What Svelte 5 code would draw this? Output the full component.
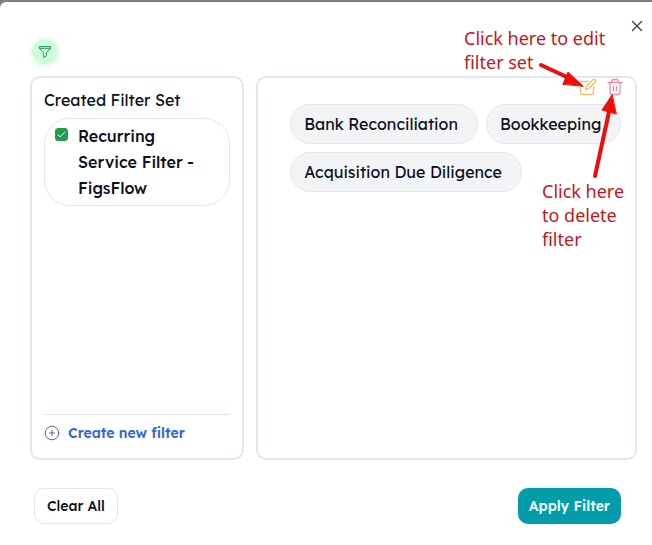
<script lang="ts">
  let filterSets = $state([
    {
      id: 1,
      name: 'Recurring Service Filter - FigsFlow',
      checked: true,
      services: [
        'Bank Reconciliation',
        'Bookkeeping',
        'Acquisition Due Diligence',
      ],
    },
  ])

  let services = $derived(
    filterSets.filter((f) => f.checked).flatMap((f) => f.services)
  )

  function clearAll() {
    filterSets.forEach((f) => (f.checked = false))
  }
</script>

<div class="modal">
  <header>
    <button class="filterToggle" aria-label="Filters">
      <svg width="14" height="14" viewBox="0 0 14 14">
        <path d="M1.5 1.5h11v1.8L8.6 7.6v3.2L5.6 12.6v-5L1.5 3.3z M1.5 3.3h11" />
      </svg>
    </button>
    <button class="close" aria-label="Close">
      <svg width="12" height="12" viewBox="0 0 12 12">
        <path d="M1.5 1.5l9 9M10.5 1.5l-9 9" />
      </svg>
    </button>
  </header>

  <main>
    <section class="panel sets">
      <h2>Created Filter Set</h2>
      <div class="setList">
        {#each filterSets as f (f.id)}
          <label class="set">
            <span class="tick">
              <input type="checkbox" bind:checked={f.checked} />
              <svg width="9" height="7" viewBox="0 0 9 7">
                <path d="M1 3.7l2.2 2.1L8 1" />
              </svg>
            </span>
            <span>{f.name}</span>
          </label>
        {/each}
      </div>
      <div class="create">
        <button>
          <svg width="16" height="16" viewBox="0 0 16 16">
            <circle cx="8" cy="8" r="6.8" />
            <path d="M8 5.5v5M5.5 8h5" />
          </svg>
          Create new filter
        </button>
      </div>
    </section>

    <section class="panel details">
      <div class="actions">
        <button class="edit" aria-label="Edit filter set">
          <svg width="18" height="18" viewBox="0 0 18 18">
            <path
              d="M9 3.5H3A1.5 1.5 0 0 0 1.5 5v10A1.5 1.5 0 0 0 3 16.5h10a1.5 1.5 0 0 0 1.5-1.5V9"
            />
            <path d="M6.5 11.5l.7-3L14.3 1.5a1 1 0 0 1 1.4 0l.8.8a1 1 0 0 1 0 1.4L9.5 10.8z" />
          </svg>
        </button>
        <button class="delete" aria-label="Delete filter set">
          <svg width="16" height="18" viewBox="0 0 16 18">
            <path d="M1 4.5h14M2.8 4.5l.4 10.5a1.5 1.5 0 0 0 1.5 1.5h6.6a1.5 1.5 0 0 0 1.5-1.5l.4-10.5" />
            <path d="M4.8 4.5V3A1.5 1.5 0 0 1 6.3 1.5h3.4A1.5 1.5 0 0 1 11.2 3v1.5" />
            <path d="M6.5 8.5v4M9.5 8.5v4" />
          </svg>
        </button>
      </div>
      <ul>
        {#each services as service}
          <li>{service}</li>
        {/each}
      </ul>

      <p class="note editNote">Click here to edit filter set</p>
      <p class="note deleteNote">Click here to delete filter</p>
      <svg class="arrows" width="110" height="130" viewBox="0 0 110 130">
        <path d="M16 7l28 13M70 118l14-64" />
        <polygon points="58,28 43,14 38,26" />
        <polygon points="87,37 77,52 91,56" />
      </svg>
    </section>
  </main>

  <footer>
    <button class="clear" onclick={clearAll}>Clear All</button>
    <button class="apply">Apply Filter</button>
  </footer>
</div>

<style>
  :global(body) {
    margin: 0;
    background: #808080;
  }

  .modal {
    box-sizing: border-box;
    min-height: calc(100vh - 2px);
    margin-top: 2px;
    padding: 16px 15px 20px 30px;
    border-radius: 6px 0 0 0;
    background: #fff;
    color: #0b1020;
    font-family: Lexend, Inter, sans-serif;
    font-size: 16px;
  }

  button {
    padding: 0;
    border: 0;
    background: none;
    color: inherit;
    font: inherit;
    cursor: pointer;
  }

  svg {
    display: block;
    fill: none;
    stroke: currentColor;
    stroke-linecap: round;
    stroke-linejoin: round;
  }

  header {
    display: flex;
    justify-content: space-between;
    align-items: flex-start;
    height: 58px;
  }

  .filterToggle {
    display: grid;
    place-items: center;
    width: 24px;
    height: 24px;
    margin: 22px 3px;
    border-radius: 50%;
    background: #cdfbdc;
    box-shadow: 0 0 4px 2px #d5fbe1;
    color: #2b9a62;
  }

  .close {
    display: grid;
    place-items: center;
    width: 16px;
    height: 16px;
    margin-right: -8px;
    color: #4a4f57;
  }

  .close svg {
    stroke-width: 1.5;
  }

  main {
    display: grid;
    grid-template-columns: 9fr 16fr;
    gap: 12px;
  }

  .panel {
    box-sizing: border-box;
    min-width: 0;
    border: 2px solid #e2e7ed;
    border-radius: 10px;
  }

  .sets {
    display: flex;
    flex-direction: column;
    padding: 10px 12px 13px;
  }

  h2 {
    margin: 0;
    font-size: 16px;
    font-weight: 400;
    line-height: 24px;
  }

  .setList {
    box-sizing: border-box;
    flex: 1;
    min-height: 302px;
    padding-top: 6px;
  }

  .set {
    display: flex;
    gap: 10px;
    padding: 4px 32px 4px 10px;
    border: 1px solid #e2e7ed;
    border-radius: 26px;
    font-weight: 500;
    line-height: 26px;
  }

  .tick {
    display: grid;
    flex: none;
    place-items: center;
    width: 13px;
    height: 13px;
    margin-top: 5px;
  }

  .tick > * {
    grid-area: 1 / 1;
  }

  .tick input {
    width: 13px;
    height: 13px;
    margin: 0;
    border: 1px solid #1f9d4d;
    border-radius: 3px;
    appearance: none;
  }

  .tick input:checked {
    background: #1f9d4d;
  }

  .tick svg {
    color: #fff;
    pointer-events: none;
  }

  .create {
    padding-top: 6px;
    border-top: 1px solid #e2e7ed;
  }

  .create button {
    display: flex;
    align-items: center;
    gap: 8px;
    color: #3468cf;
    font-size: 14px;
    font-weight: 600;
    line-height: 24px;
  }

  .create svg {
    color: #54689c;
  }

  .details {
    position: relative;
    padding-right: 8px;
    padding-left: 32px;
  }

  .actions {
    display: flex;
    justify-content: flex-end;
    gap: 10px;
    height: 26px;
    padding-right: 4px;
  }

  .actions svg {
    stroke-width: 1.3;
  }

  .actions button {
    height: 18px;
  }

  .edit {
    color: #ebbf6c;
  }

  .delete {
    color: #ee8ca0;
  }

  ul {
    display: flex;
    flex-wrap: wrap;
    gap: 8px;
    margin: 0;
    padding: 0;
    list-style: none;
  }

  li {
    padding: 7px 19px 7px 13px;
    border: 1px solid #e2e7ed;
    border-radius: 20px;
    background: #f2f4f6;
    line-height: 24px;
  }

  .note {
    position: absolute;
    right: 0;
    margin: 0;
    color: #c4161c;
    font-family: 'Noto Sans', sans-serif;
    font-size: 18px;
    line-height: 24px;
  }

  .editNote {
    top: -52px;
    width: 171px;
  }

  .deleteNote {
    top: 101px;
    width: 93px;
  }

  .arrows {
    position: absolute;
    top: -20px;
    right: 0;
    color: #ec0e0b;
    pointer-events: none;
  }

  .arrows path {
    stroke-width: 4;
  }

  .arrows polygon {
    fill: currentColor;
  }

  footer {
    display: flex;
    justify-content: space-between;
    padding: 28px 16px 0 4px;
  }

  footer button {
    height: 36px;
    padding: 0 12px;
    border-radius: 10px;
    font-size: 14px;
    font-weight: 600;
  }

  .clear {
    border: 1px solid #e2e7ed;
    font-weight: 500;
  }

  .apply {
    padding: 0 11px;
    background: #039ca8;
    color: #eafcfd;
  }
</style>
